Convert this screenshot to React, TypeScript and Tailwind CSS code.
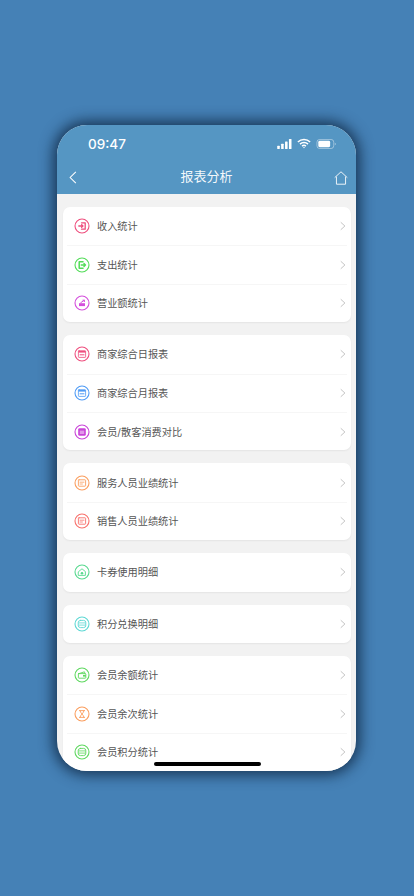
const FONT = "font-['Inter','Noto_Sans_CJK_SC',sans-serif]";

type IconProps = { color: string; kind: string };

const Glyph = ({ kind, color }: { kind: string; color: string }) => {
  const s = { stroke: color, fill: "none", strokeWidth: 1.1, strokeLinecap: "round", strokeLinejoin: "round" } as const;
  switch (kind) {
    case "in":
      return (
        <>
          <path d="M7.5 4.8h3.7v6.4H7.5" {...s} strokeWidth={1.3} />
          <path d="M4.8 8h4.2M7.6 6.6 9 8l-1.4 1.4" {...s} strokeWidth={1.3} />
        </>
      );
    case "out":
      return (
        <>
          <path d="M9 4.8H5.2v6.4H9" {...s} strokeWidth={1.5} />
          <path d="M7.2 8h4.3M10 6.6 11.5 8 10 9.4" {...s} strokeWidth={1.4} />
        </>
      );
    case "sales":
      return (
        <>
          <path d="M5 8.2h6v2.9H5z" fill={color} />
          <path d="M6.8 7.6 10.2 5.4M8.9 5.2h1.5v1.4" {...s} strokeWidth={1} />
        </>
      );
    case "cal":
      return (
        <>
          <rect x="4.4" y="4.8" width="7.2" height="6.6" rx="0.6" {...s} strokeWidth={0.8} />
          <path d="M4.4 4.8h7.2v1.8H4.4z" fill={color} />
          <path d="M6 8.8h4" {...s} strokeWidth={1} />
        </>
      );
    case "compare":
      return (
        <>
          <rect x="4.2" y="4.2" width="7.6" height="7.6" rx="1.4" fill={color} />
          <rect x="5.8" y="6.6" width="4.4" height="3.4" fill="#fff" fillOpacity="0.45" />
        </>
      );
    case "staff":
      return (
        <>
          <rect x="4.4" y="4.8" width="7.2" height="6.4" rx="0.6" {...s} strokeWidth={0.9} />
          <path d="M6 7.2h4M6 9h2.4" {...s} strokeWidth={0.8} />
        </>
      );
    case "card":
      return (
        <>
          <path d="M4.6 7.6 8 4.8l3.4 2.8v3.8H4.6z" {...s} strokeWidth={0.9} />
          <circle cx="8" cy="9.2" r="1.3" fill={color} />
        </>
      );
    case "points":
      return (
        <>
          <rect x="4.2" y="4.4" width="7.6" height="7.2" rx="2.2" {...s} strokeWidth={0.9} />
          <path d="M4.6 6.9h6.8M4.6 9.1h6.8" {...s} strokeWidth={0.8} />
        </>
      );
    case "wallet":
      return (
        <>
          <path d="M4.4 6.8 10.4 4.8l.6 1.6" {...s} strokeWidth={0.9} />
          <rect x="4.4" y="6.6" width="7.4" height="4.6" rx="0.6" {...s} strokeWidth={0.9} />
          <rect x="9" y="7.9" width="2.8" height="1.7" fill={color} />
        </>
      );
    default:
      return <path d="M5.4 4.6h5.2M5.4 11.4h5.2M6 4.8c0 2 4 4.4 4 6.4M10 4.8c0 2-4 4.4-4 6.4" {...s} strokeWidth={0.9} />;
  }
};

const RowIcon = ({ color, kind }: IconProps) => (
  <svg viewBox="0 0 16 16" className="w-[16px] h-[16px] shrink-0 overflow-visible">
    <circle cx="8" cy="8" r="7" fill="none" stroke={color} strokeWidth="1.1" />
    <Glyph kind={kind} color={color} />
  </svg>
);

type Row = { label: string; color: string; kind: string };

const groups: Row[][] = [
  [
    { label: "收入统计", color: "#ee4f7e", kind: "in" },
    { label: "支出统计", color: "#52dc58", kind: "out" },
    { label: "营业额统计", color: "#d44fdc", kind: "sales" },
  ],
  [
    { label: "商家综合日报表", color: "#ee4f7e", kind: "cal" },
    { label: "商家综合月报表", color: "#4f9bf5", kind: "cal" },
    { label: "会员/散客消费对比", color: "#c944d8", kind: "compare" },
  ],
  [
    { label: "服务人员业绩统计", color: "#fa9e5f", kind: "staff" },
    { label: "销售人员业绩统计", color: "#f8716c", kind: "staff" },
  ],
  [{ label: "卡券使用明细", color: "#58d98f", kind: "card" }],
  [{ label: "积分兑换明细", color: "#5ed8d4", kind: "points" }],
  [
    { label: "会员余额统计", color: "#5fd860", kind: "wallet" },
    { label: "会员余次统计", color: "#fa9e5f", kind: "hourglass" },
    { label: "会员积分统计", color: "#5fd860", kind: "points" },
  ],
];

const Chevron = () => (
  <svg viewBox="0 0 8 12" className="w-[6px] h-[10px]">
    <path d="M1 1l5.5 5L1 11" fill="none" stroke="#bdbdbd" strokeWidth="1.2" />
  </svg>
);

export default function App() {
  return (
    <div className={`${FONT} w-[414px] h-[896px] bg-[#4581b6] flex justify-center pt-[125px] pr-[1px] overflow-hidden`}>
      <div className="relative w-[299px] h-[646px] rounded-[30px] overflow-hidden shadow-[0_0_14px_4px_rgba(10,30,55,0.75)] bg-[#f2f2f2] flex flex-col">
        {/* status bar + nav */}
        <div className="h-[69px] shrink-0 bg-[#5596c3] text-white flex flex-col">
          <div className="h-[29px] flex items-end justify-between pl-[31px] pr-[19px]">
            <span className="text-[13.5px] leading-[20px] font-medium">09:47</span>
            <div className="flex items-center gap-[5px] pb-[5px]">
              <svg viewBox="0 0 16 11" className="w-[15px] h-[10px]" fill="#fff">
                <rect x="0" y="7.5" width="2.8" height="3.5" rx="0.6" />
                <rect x="4.3" y="5.3" width="2.8" height="5.7" rx="0.6" />
                <rect x="8.6" y="2.8" width="2.8" height="8.2" rx="0.6" />
                <rect x="12.9" y="0" width="2.8" height="11" rx="0.6" />
              </svg>
              <svg viewBox="0 0 16 12" className="w-[14px] h-[11px]" fill="none" stroke="#fff" strokeWidth="1.7">
                <path d="M1 4.2a10 10 0 0 1 14 0M3.4 6.7a6.6 6.6 0 0 1 9.2 0M5.8 9a3.2 3.2 0 0 1 4.4 0" />
                <circle cx="8" cy="10.6" r="0.8" fill="#fff" stroke="none" />
              </svg>
              <svg viewBox="0 0 22 11" className="w-[21px] h-[10px]">
                <rect x="0.5" y="0.5" width="18.5" height="10" rx="3" fill="none" stroke="#fff" strokeOpacity="0.45" />
                <rect x="2" y="2" width="13" height="7" rx="1.5" fill="#fff" />
                <path d="M20.2 4v3a1.6 1.6 0 0 0 0-3z" fill="#fff" fillOpacity="0.5" />
              </svg>
            </div>
          </div>
          <div className="flex-1 flex items-center justify-between pl-[12px] pr-[8px] relative pt-[7px]">
            <svg viewBox="0 0 9 16" className="w-[8px] h-[13px]" fill="none" stroke="#fff" strokeWidth="1.3">
              <path d="M8 1 1 8l7 7" />
            </svg>
            <span className="absolute left-0 right-0 text-center text-[13px] leading-[20px] text-white/95 pb-[3px]">
              报表分析
            </span>
            <svg viewBox="0 0 16 16" className="w-[14px] h-[14px]" fill="none" stroke="#fff" strokeWidth="1">
              <path d="M.8 7.6 8 .9l7.2 6.7M2.8 6.4v8.7h10.4V6.4" />
            </svg>
          </div>
        </div>

        {/* report list */}
        <div className="flex-1 min-h-0 pl-[6px] pr-[5px] pt-[13px] flex flex-col gap-[13px]">
          {groups.map((rows, i) => (
            <div key={i} className="shrink-0 bg-white rounded-[7px] shadow-[0_1px_2px_rgba(0,0,0,0.06)] px-[4px]">
              {rows.map((row, j) => (
                <div
                  key={row.label}
                  className={`h-[38.4px] flex items-center pl-[7px] pr-[1px] ${j > 0 ? "border-t border-[#f6f6f6]" : ""}`}
                >
                  <RowIcon color={row.color} kind={row.kind} />
                  <span className="ml-[7px] flex-1 text-[10.2px] leading-[14px] text-[#555555]">
                    {row.label}
                  </span>
                  <Chevron />
                </div>
              ))}
            </div>
          ))}
        </div>

        <div className="absolute bottom-[5px] left-[97px] w-[107px] h-[4px] rounded-full bg-black" />
      </div>
    </div>
  );
}
